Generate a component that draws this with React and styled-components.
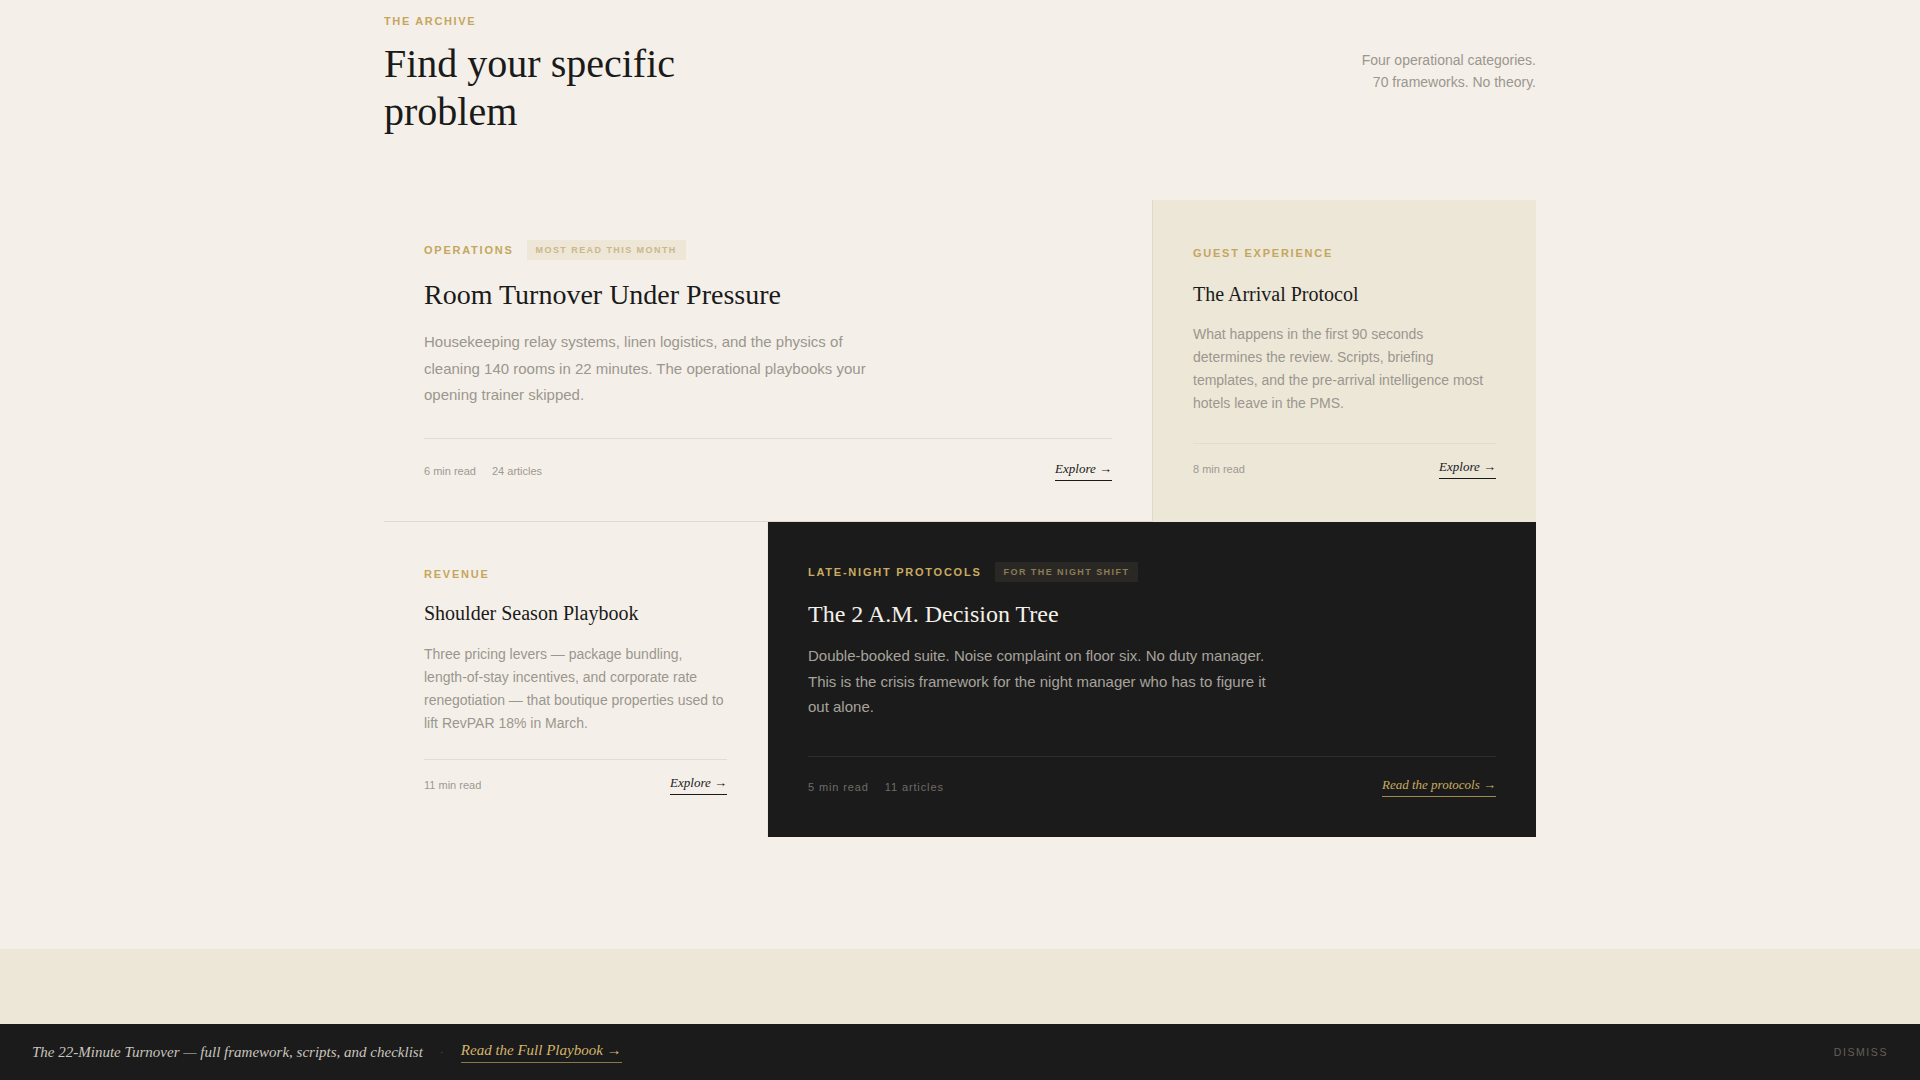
import React from 'react'
import styled, { createGlobalStyle } from 'styled-components'

const GlobalStyle = createGlobalStyle`
  html, body {
    margin: 0;
    padding: 0;
    background: #f4f0e9;
  }
  body {
    font-family: "Liberation Sans", Arial, sans-serif;
    -webkit-font-smoothing: antialiased;
  }
  * { box-sizing: border-box; }
`

const Section = styled.section`
  background: #f4f0e9;
  padding: 13px 0 112px;
`

const Container = styled.div`
  width: 1152px;
  margin: 0 auto;
`

const Header = styled.header`
  display: flex;
  justify-content: space-between;
  align-items: flex-start;
  margin-bottom: 64px;
`

const Eyebrow = styled.div`
  font-size: 11px;
  line-height: 16px;
  font-weight: 700;
  letter-spacing: 0.15em;
  text-transform: uppercase;
  color: #c4a65e;
  margin-bottom: 11px;
`

const Heading = styled.h2`
  margin: 0;
  max-width: 380px;
  font-family: "Liberation Serif", "Times New Roman", serif;
  font-weight: 400;
  font-size: 40px;
  line-height: 48px;
  color: #1a1a1a;
`

const Intro = styled.p`
  margin: 36px 0 0;
  text-align: right;
  font-size: 14px;
  line-height: 22px;
  color: #9b968e;
`

const Grid = styled.div`
  display: grid;
  grid-template-columns: repeat(3, 1fr);
`

const Card = styled.article`
  grid-column: span ${p => p.$span || 1};
  display: flex;
  flex-direction: column;
  padding: 40px;
  background: ${p => (p.$tone === 'dark' ? '#1b1b1b' : p.$tone === 'sand' ? '#ede7d8' : 'transparent')};
  border-left: ${p => (p.$borderLeft ? '1px solid #e1dac9' : 'none')};
  border-bottom: ${p => (p.$borderBottom ? '1px solid #e0dace' : 'none')};
  border-right: ${p => (p.$borderRight ? '1px solid #ebe6dc' : 'none')};
`

const LabelRow = styled.div`
  display: flex;
  align-items: center;
  gap: 13px;
  min-height: 20px;
  margin-top: ${p => p.$top || '0'};
  margin-bottom: ${p => p.$gap || '16px'};
`

const Category = styled.span`
  font-size: 11px;
  font-weight: 700;
  letter-spacing: 0.16em;
  text-transform: uppercase;
  color: ${p => (p.$dark ? '#c9ab62' : '#c4a65e')};
`

const Badge = styled.span`
  display: inline-flex;
  align-items: center;
  height: 20px;
  padding: 0 9px;
  font-size: 9px;
  font-weight: 700;
  letter-spacing: 0.16em;
  text-transform: uppercase;
  background: ${p => (p.$dark ? '#2a2825' : '#eee7d7')};
  color: ${p => (p.$dark ? '#8c7c55' : '#cab78c')};
`

const Title = styled.h3`
  margin: 0 0 ${p => p.$mb || '16px'};
  font-family: "Liberation Serif", "Times New Roman", serif;
  font-weight: 400;
  font-size: ${p => p.$size || 20}px;
  line-height: 1.3;
  color: ${p => (p.$dark ? '#f4f0e9' : '#1a1a1a')};
`

const Desc = styled.p`
  margin: 0;
  max-width: ${p => p.$max || 'none'};
  font-size: ${p => p.$size || 14}px;
  line-height: ${p => p.$lh || 1.65};
  color: ${p => (p.$dark ? '#a7a39c' : '#9b968e')};
`

const Footer = styled.div`
  margin-top: ${p => p.$mt || '28px'};
  padding-top: ${p => p.$pt || '20px'};
  border-top: 1px solid ${p => (p.$dark ? '#2f2e2c' : '#e2ddd2')};
  display: flex;
  justify-content: space-between;
  align-items: center;
`

const MetaGroup = styled.div`
  display: flex;
  gap: 16px;
`

const Meta = styled.span`
  font-size: 11px;
  letter-spacing: ${p => (p.$dark ? '0.08em' : '0')};
  color: ${p => (p.$dark ? '#6f6c67' : '#9e9992')};
`

const Link = styled.a`
  font-family: "Liberation Serif", "Times New Roman", serif;
  font-style: italic;
  font-size: 13px;
  line-height: 16px;
  padding-bottom: 3px;
  text-decoration: none;
  color: ${p => (p.$gold ? '#c9ab62' : '#1a1a1a')};
  border-bottom: 1px solid ${p => (p.$gold ? '#a08a50' : '#1a1a1a')};
  cursor: pointer;
`

const NextBand = styled.div`
  height: 160px;
  background: #ede7d8;
`

const StickyBar = styled.div`
  position: fixed;
  left: 0;
  right: 0;
  bottom: 0;
  height: 56px;
  padding: 0 32px;
  background: #1b1b1b;
  display: flex;
  align-items: center;
  justify-content: space-between;
`

const BarLeft = styled.div`
  display: flex;
  align-items: center;
  gap: 17px;
`

const BarText = styled.span`
  font-family: "Liberation Serif", "Times New Roman", serif;
  font-style: italic;
  font-size: 15px;
  color: #c9c5bd;
`

const Dot = styled.span`
  color: #4a4843;
  font-size: 12px;
`

const BarLink = styled.a`
  font-family: "Liberation Serif", "Times New Roman", serif;
  font-style: italic;
  font-size: 15px;
  color: #d4b56a;
  padding-bottom: 3px;
  border-bottom: 1px solid #8a774a;
  text-decoration: none;
  cursor: pointer;
`

const Dismiss = styled.button`
  background: none;
  border: 0;
  padding: 0;
  font-family: "Liberation Sans", Arial, sans-serif;
  font-size: 10.5px;
  letter-spacing: 0.15em;
  color: #63605a;
  cursor: pointer;
`

export default function App() {
  return (
    <>
      <GlobalStyle />
      <Section>
        <Container>
          <Header>
            <div>
              <Eyebrow>The Archive</Eyebrow>
              <Heading>Find your specific problem</Heading>
            </div>
            <Intro>
              Four operational categories.
              <br />
              70 frameworks. No theory.
            </Intro>
          </Header>

          <Grid>
            <Card $span={2} $borderBottom>
              <LabelRow $gap="17px">
                <Category>Operations</Category>
                <Badge>Most read this month</Badge>
              </LabelRow>
              <Title $size={28} $mb="16px">Room Turnover Under Pressure</Title>
              <Desc $size={15} $lh={1.75} $max="460px">
                Housekeeping relay systems, linen logistics, and the physics of cleaning 140 rooms in 22 minutes. The
                operational playbooks your opening trainer skipped.
              </Desc>
              <Footer $mt="30px" $pt="22px">
                <MetaGroup>
                  <Meta>6 min read</Meta>
                  <Meta>24 articles</Meta>
                </MetaGroup>
                <Link>Explore →</Link>
              </Footer>
            </Card>

            <Card $tone="sand" $borderLeft>
              <LabelRow $top="3px" $gap="18px">
                <Category>Guest Experience</Category>
              </LabelRow>
              <Title $size={20} $mb="16px">The Arrival Protocol</Title>
              <Desc>
                What happens in the first 90 seconds determines the review. Scripts, briefing templates, and the
                pre-arrival intelligence most hotels leave in the PMS.
              </Desc>
              <Footer $mt="28px" $pt="15px">
                <MetaGroup>
                  <Meta>8 min read</Meta>
                </MetaGroup>
                <Link>Explore →</Link>
              </Footer>
            </Card>

            <Card $borderRight>
              <LabelRow $top="2px" $gap="16px">
                <Category>Revenue</Category>
              </LabelRow>
              <Title $size={20} $mb="17px">Shoulder Season Playbook</Title>
              <Desc>
                Three pricing levers — package bundling, length-of-stay incentives, and corporate rate renegotiation —
                that boutique properties used to lift RevPAR 18% in March.
              </Desc>
              <Footer $mt="23px" $pt="15px">
                <MetaGroup>
                  <Meta>11 min read</Meta>
                </MetaGroup>
                <Link>Explore →</Link>
              </Footer>
            </Card>

            <Card $span={2} $tone="dark">
              <LabelRow $gap="17px">
                <Category $dark>Late-Night Protocols</Category>
                <Badge $dark>For the night shift</Badge>
              </LabelRow>
              <Title $size={24} $dark $mb="13px">The 2 A.M. Decision Tree</Title>
              <Desc $size={15} $lh={1.7} $dark $max="470px">
                Double-booked suite. Noise complaint on floor six. No duty manager. This is the crisis framework for the
                night manager who has to figure it out alone.
              </Desc>
              <Footer $dark $mt="36px" $pt="20px">
                <MetaGroup>
                  <Meta $dark>5 min read</Meta>
                  <Meta $dark>11 articles</Meta>
                </MetaGroup>
                <Link $gold>Read the protocols →</Link>
              </Footer>
            </Card>
          </Grid>
        </Container>
      </Section>
      <NextBand />

      <StickyBar>
        <BarLeft>
          <BarText>The 22-Minute Turnover — full framework, scripts, and checklist</BarText>
          <Dot>·</Dot>
          <BarLink>Read the Full Playbook →</BarLink>
        </BarLeft>
        <Dismiss>DISMISS</Dismiss>
      </StickyBar>
    </>
  )
}
